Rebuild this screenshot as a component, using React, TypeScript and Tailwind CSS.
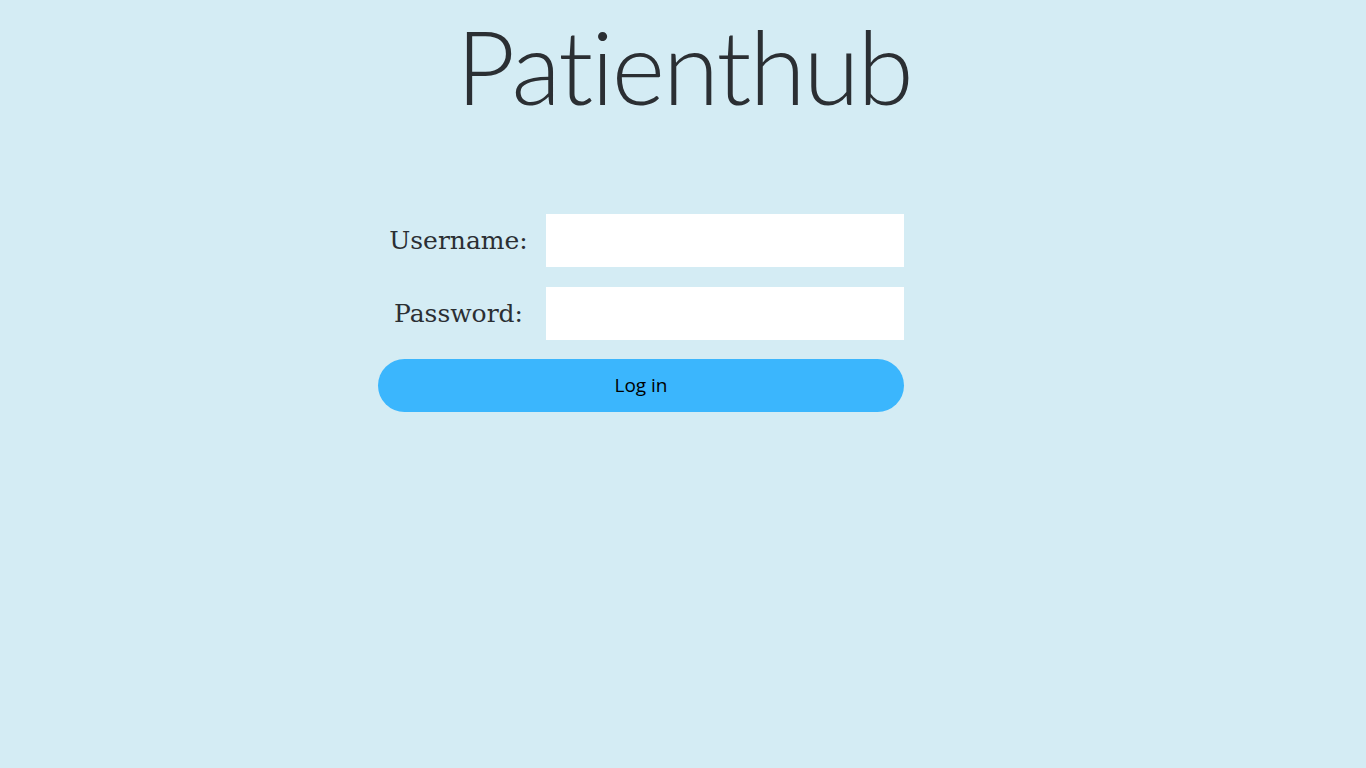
export default function App() {
  return (
    <div className="min-h-screen w-full bg-[#d4ecf4] font-['Lato',sans-serif]">
      {/* Title */}
      <div className="flex justify-center pt-[6px]">
        <h1 className="font-['Lato',sans-serif] font-light text-[102px] leading-[120px] text-[#2b2f33] tracking-[-2px] translate-x-[1px]">
          Patienthub
        </h1>
      </div>

      {/* Login form */}
      <form className="ml-[378px] mt-[88px] flex w-[526px] flex-col gap-[20px]">
        <div className="flex items-center">
          <label className="w-[161px] text-center font-['DejaVu_Serif',serif] text-[25px] text-[#2b2f33]">
            Username:
          </label>
          <input type="text" className="ml-[7px] h-[53px] w-[358px] bg-white outline-none" />
        </div>
        <div className="flex items-center">
          <label className="w-[161px] text-center font-['DejaVu_Serif',serif] text-[25px] text-[#2b2f33]">
            Password:
          </label>
          <input type="password" className="ml-[7px] h-[53px] w-[358px] bg-white outline-none" />
        </div>
        <button
          type="button"
          className="-mt-[1px] h-[53px] w-full rounded-full bg-[#3bb6fd] font-['Open_Sans',sans-serif] text-[19px] text-black"
        >
          Log in
        </button>
      </form>
    </div>
  )
}
